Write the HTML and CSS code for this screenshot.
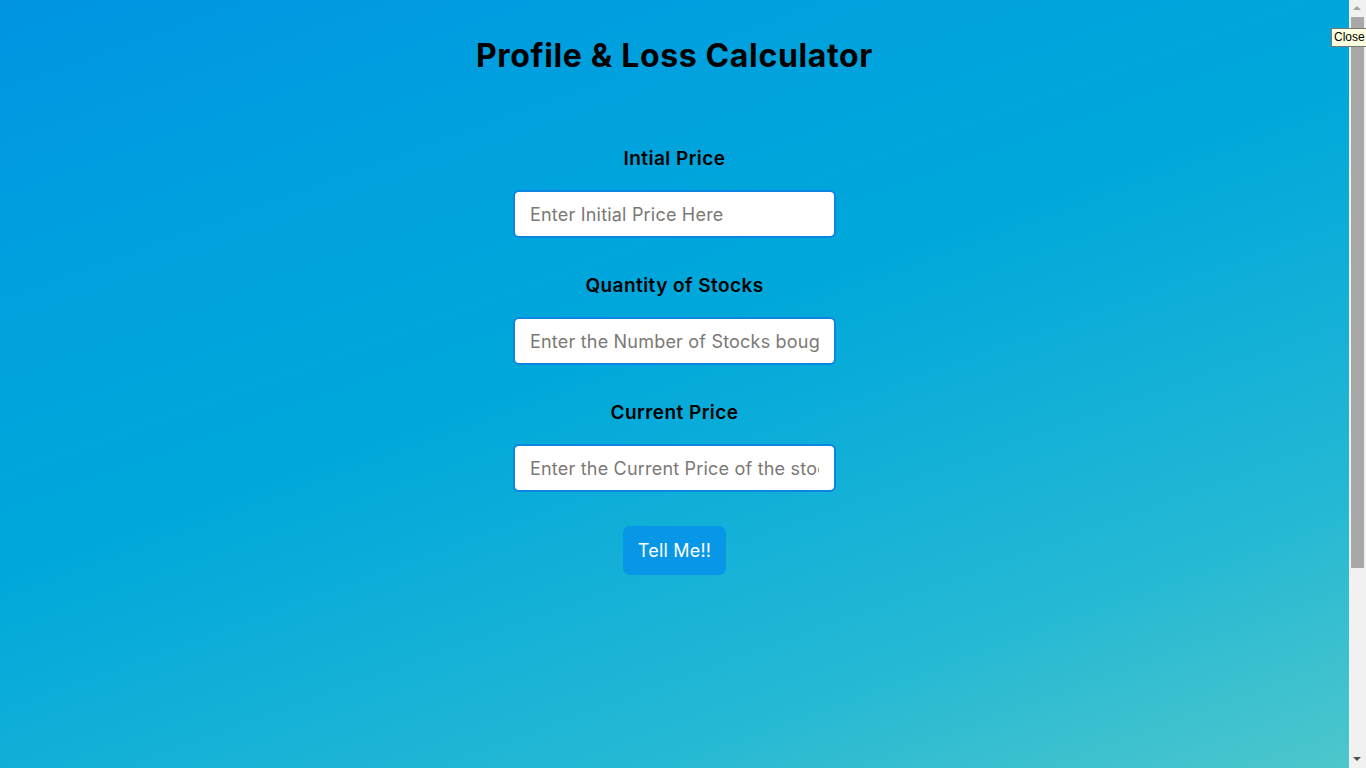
FILE: index.html
```html
<!DOCTYPE html>
<html lang="en">
<head>
<meta charset="utf-8">
<title>Profile &amp; Loss Calculator</title>
<link rel="stylesheet" href="styles.css">
</head>
<body>
<main class="page">
  <h1 class="title">Profile &amp; Loss Calculator</h1>
  <form class="calc">
    <div class="field">
      <label class="field-label" for="initial">Intial Price</label>
      <input class="field-input" id="initial" type="text" placeholder="Enter Initial Price Here">
    </div>
    <div class="field">
      <label class="field-label" for="qty">Quantity of Stocks</label>
      <input class="field-input" id="qty" type="text" placeholder="Enter the Number of Stocks bought">
    </div>
    <div class="field">
      <label class="field-label" for="current">Current Price</label>
      <input class="field-input" id="current" type="text" placeholder="Enter the Current Price of the stock">
    </div>
    <button class="tell-btn" type="button">Tell Me!!</button>
  </form>
</main>
<div class="fake-scrollbar" aria-hidden="true">
  <div class="sb-arrow sb-up"></div>
  <div class="sb-track"><div class="sb-thumb"></div></div>
  <div class="sb-arrow sb-down"></div>
</div>
<div class="tooltip">Close</div>
</body>
</html>
```

FILE: styles.css
```css
html, body {
  margin: 0;
  padding: 0;
  height: 100%;
  overflow: hidden;
}

body {
  font-family: "Inter", "Open Sans", sans-serif;
  color: #000;
  background: #0096e0;
}

.page {
  width: calc(100% - 17px);
  min-height: 1023px;
  box-sizing: border-box;
  padding-top: 32px;
  display: flex;
  flex-direction: column;
  align-items: center;
  background: linear-gradient(160deg,
    #0094e2 0%,
    #00a1de 20%,
    #00a8da 38%,
    #10afd8 50%,
    #24b8d4 65%,
    #4ac6cc 82%,
    #7fd4c6 100%);
}

.title {
  margin: 0;
  font-size: 32px;
  line-height: 48px;
  font-weight: 700;
  letter-spacing: 0.65px;
}

.calc {
  margin-top: 64px;
  display: flex;
  flex-direction: column;
  align-items: center;
}

.field {
  display: flex;
  flex-direction: column;
  align-items: center;
  margin-bottom: 33px;
}

.field-label {
  font-size: 19px;
  line-height: 28px;
  font-weight: 600;
  letter-spacing: 0.45px;
  padding-top: 1px;
  margin-bottom: 17px;
}

.field-input {
  width: 323px;
  height: 48px;
  box-sizing: border-box;
  border: 2px solid #0a86e2;
  border-radius: 6px;
  background: #fff;
  padding: 0 15px;
  font-family: inherit;
  font-size: 18px;
  letter-spacing: 0.2px;
  color: #222;
  outline: none;
}

.field-input::placeholder {
  color: #7b7876;
}

.tell-btn {
  margin-top: 1px;
  width: 103px;
  height: 49px;
  border: none;
  border-radius: 7px;
  background: #0797e6;
  color: #fff;
  font-family: inherit;
  font-size: 18px;
  font-weight: 400;
  letter-spacing: 0.2px;
  cursor: pointer;
}

/* imitation of the browser scrollbar shown in the screenshot */
.fake-scrollbar {
  position: fixed;
  top: 0;
  right: 0;
  width: 17px;
  height: 100%;
  background: #f1f1f1;
  display: flex;
  flex-direction: column;
}

.sb-arrow {
  height: 17px;
  flex: none;
  position: relative;
}

.sb-arrow::after {
  content: "";
  position: absolute;
  left: 4px;
  width: 0;
  height: 0;
  border-left: 4px solid transparent;
  border-right: 4px solid transparent;
}

.sb-up::after {
  top: 6px;
  border-bottom: 4px solid #a3a3a3;
}

.sb-down::after {
  top: 6px;
  border-top: 4px solid #505050;
}

.sb-track {
  flex: 1;
  padding: 0 2px;
}

.sb-thumb {
  height: 551px;
  background: #a8a8a8;
}

.tooltip {
  position: fixed;
  top: 28px;
  left: 1331px;
  height: 19px;
  box-sizing: border-box;
  padding: 0 2px;
  border: 1px solid #767676;
  background: #ffffe1;
  font-family: "Liberation Sans", Arial, sans-serif;
  font-size: 12px;
  line-height: 17px;
  color: #000;
  white-space: nowrap;
}
```
